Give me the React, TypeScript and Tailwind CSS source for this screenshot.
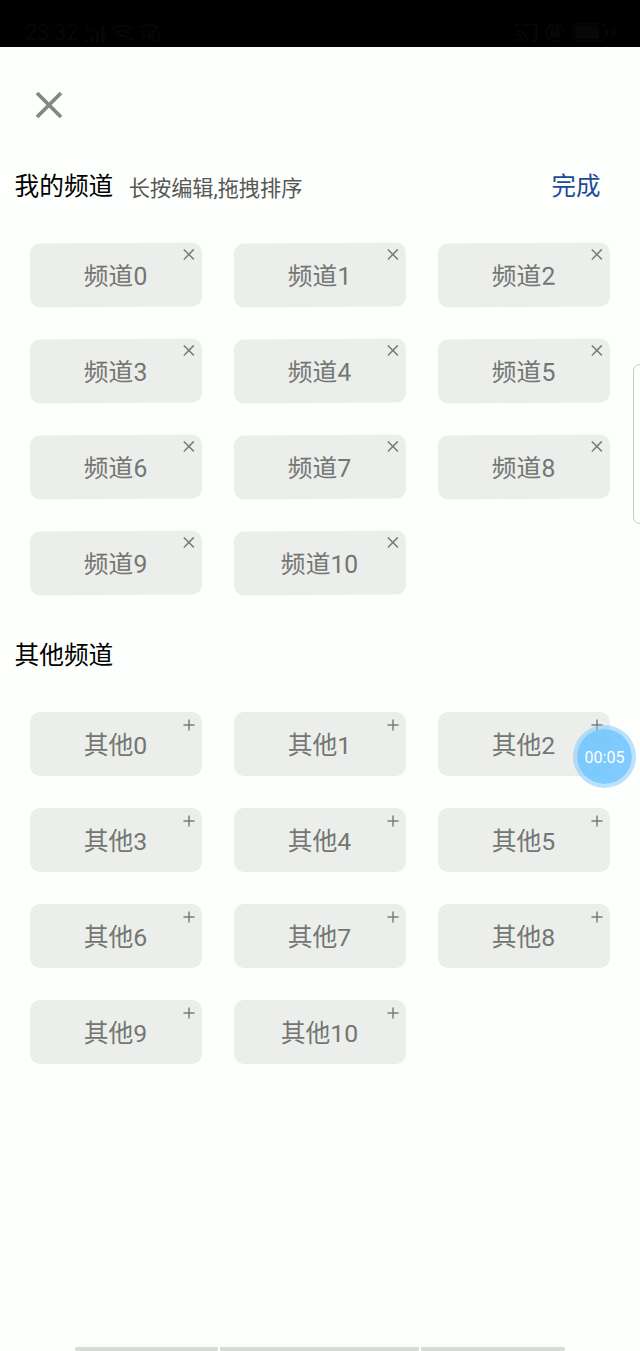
import { useState } from "react";

interface Channel {
    id: number;
    name: string;
}

interface ChannelItemProps {
    channel: Channel;
    type: "mine" | "other";
    onClick: (channel: Channel) => void;
}

const createChannels = (prefix: string): Channel[] =>
    Array.from({ length: 11 }, (_, index) => ({ id: index, name: `${prefix}${index}` }));

const StatusBar = () => {
    return (
        <div className="flex h-[47px] items-end justify-between bg-black pr-[22px] pb-[4px] pl-[25px] text-[#050805]">
            <div className="flex items-end gap-[6px]">
                <span className="text-[22px] leading-[20px] -tracking-[0.3px]">23:32</span>
                <svg width="21" height="18" viewBox="0 0 21 18" fill="none" stroke="currentColor" strokeWidth="3.4" strokeLinecap="round">
                    <path d="M2.5 15.5v.2M8 12v3.7M13.5 7.5v8.2M19 2v13.7" />
                    <path d="M3.5 1L1 5h4M3.5 1v6M10.5 2C8 .2 6.5 2 6.5 4s2 3.500 4 2V4H9" strokeWidth="1" />
                </svg>
                <svg width="24" height="20" viewBox="0 0 24 20" fill="none" stroke="currentColor" strokeWidth="2.4">
                    <path d="M1 6.500C7 1 16 1 22 6.500M4.500 10.500c4-3.600 10-3.600 14 0M8 14c2-2 5-2 7 0" />
                    <path d="M11.500 18l-2-2h4zM16 16l3-2.500V18zM23.500 16l-3-2.500V18z" fill="currentColor" stroke="none" />
                </svg>
                <span className="relative -ml-px text-[16px] leading-[13px] -tracking-[1.5px]">
                    HD
                    <svg className="absolute -top-[7px] left-0" width="18" height="7" viewBox="0 0 18 7" fill="none" stroke="currentColor" strokeWidth="2.500">
                        <path d="M1 6V4.500C5 .5 13 .5 17 4.500V6" />
                    </svg>
                </span>
            </div>
            <div className="flex items-end gap-[7px]">
                <svg width="23" height="20" viewBox="0 0 23 20" fill="none" stroke="currentColor" strokeWidth="2.200">
                    <path d="M1 4V1.500h20.500v17H16M1 7.500c7 0 11 5 11 11M1 12c4 0 6.500 3 6.500 6.500" />
                    <circle cx="2.500" cy="17.500" r="1.500" fill="currentColor" stroke="none" />
                </svg>
                <svg width="20" height="20" viewBox="0 0 20 20" fill="none" stroke="currentColor" strokeWidth="1.800">
                    <path d="M15 17A8.500 8.500 0 1 1 18.500 11M7 9V7.500a3 3 0 0 1 6 0V9" />
                    <path d="M5.500 8.500h9v6h-9z" fill="currentColor" stroke="none" />
                </svg>
                <svg width="46" height="20" viewBox="0 0 46 20" fill="none" stroke="currentColor" strokeWidth="1.300">
                    <rect x="1" y="1" width="32" height="17" rx="3" />
                    <path d="M3 3h24v13H3zM34 7h2v5h-2zM43 3l-5 8h3l-1 6 5-8h-3z" fill="currentColor" stroke="none" />
                </svg>
            </div>
        </div>
    );
};

const ChannelItem = ({ channel, type, onClick }: ChannelItemProps) => {
    const isMine = type === "mine";

    return (
        <button
            type="button"
            onClick={() => onClick(channel)}
            className={`relative flex h-16 items-center justify-center rounded-[10px] bg-[#eceeeb] pr-[1px] text-[24.8px] leading-8 text-[#747673] ${isMine ? "-rotate-[0.45deg] pt-[3px]" : "pt-[4px]"}`}
        >
            {channel.name}
            <svg
                className={`absolute right-[7px] ${isMine ? "top-[6px]" : "top-[6.5px]"}`}
                width="12"
                height="12"
                viewBox="0 0 12 12"
                fill="none"
                stroke="#7b7d7a"
                strokeWidth="1.5"
            >
                <path d={isMine ? "M1 1l10 10M11 1L1 11" : "M6 .5v11M.5 6h11"} />
            </svg>
        </button>
    );
};

const App = () => {
    const [myChannels, setMyChannels] = useState<Channel[]>(createChannels("频道"));
    const [otherChannels, setOtherChannels] = useState<Channel[]>(createChannels("其他"));

    const handleRemove = (channel: Channel) => {
        setMyChannels(myChannels.filter((item) => item.name !== channel.name));
        setOtherChannels([...otherChannels, channel]);
    };

    const handleAdd = (channel: Channel) => {
        setOtherChannels(otherChannels.filter((item) => item.name !== channel.name));
        setMyChannels([...myChannels, channel]);
    };

    return (
        <div className="relative flex h-[1351px] w-[640px] flex-col overflow-hidden bg-[#fdfffc] font-[Roboto,'Noto_Sans_CJK_SC',sans-serif]">
            <StatusBar />

            <button type="button" aria-label="close" className="mt-[43px] ml-[34px] size-[30px]">
                <svg width="30" height="30" viewBox="0 0 30 30" fill="none" stroke="#858784" strokeWidth="3.8">
                    <path d="M3 3l24 24M27 3L3 27" />
                </svg>
            </button>

            <div className="mt-[49px] flex h-9 items-center pr-[39.5px] pl-[14.5px]">
                <h2 className="text-[24.7px] leading-9 text-black">我的频道</h2>
                <span className="mt-[4px] ml-[15.5px] text-[21.2px] leading-8 text-[#565856]">长按编辑,拖拽排序</span>
                <button type="button" className="ml-auto text-[24.5px] leading-9 text-[#1c4a97]">完成</button>
            </div>
            <div className="mt-[38px] grid grid-cols-3 gap-8 px-[30px]">
                {myChannels.map((channel) => (
                    <ChannelItem key={channel.name} channel={channel} type="mine" onClick={handleRemove} />
                ))}
            </div>

            <h2 className="mt-[43px] pl-[14.5px] text-[24.7px] leading-9 text-black">其他频道</h2>
            <div className="mt-[38px] grid grid-cols-3 gap-8 px-[30px]">
                {otherChannels.map((channel) => (
                    <ChannelItem key={channel.name} channel={channel} type="other" onClick={handleAdd} />
                ))}
            </div>

            {/* edge panel handle */}
            <div className="absolute top-[364px] -right-[8px] h-[160px] w-[15px] rounded-[7px] border border-[#c9cbc8] bg-[#fdfffc]" />

            {/* recording timer */}
            <div className="absolute top-[725px] left-[573px] flex size-[63px] items-center justify-center rounded-full border-4 border-[#83cbfb]/55 bg-[#68c2ff]/85 bg-clip-padding pt-[2px] text-[16px] text-white">
                00:05
            </div>

            {/* gesture bar */}
            <div className="mt-auto flex h-[4.5px] gap-[2px] pr-[75px] pl-[75px]">
                <div className="w-[143px] rounded-l-sm bg-[#d8dad7]" />
                <div className="w-[199px] bg-[#d8dad7]" />
                <div className="flex-1 rounded-r-sm bg-[#d8dad7]" />
            </div>
        </div>
    );
};

export default App;
